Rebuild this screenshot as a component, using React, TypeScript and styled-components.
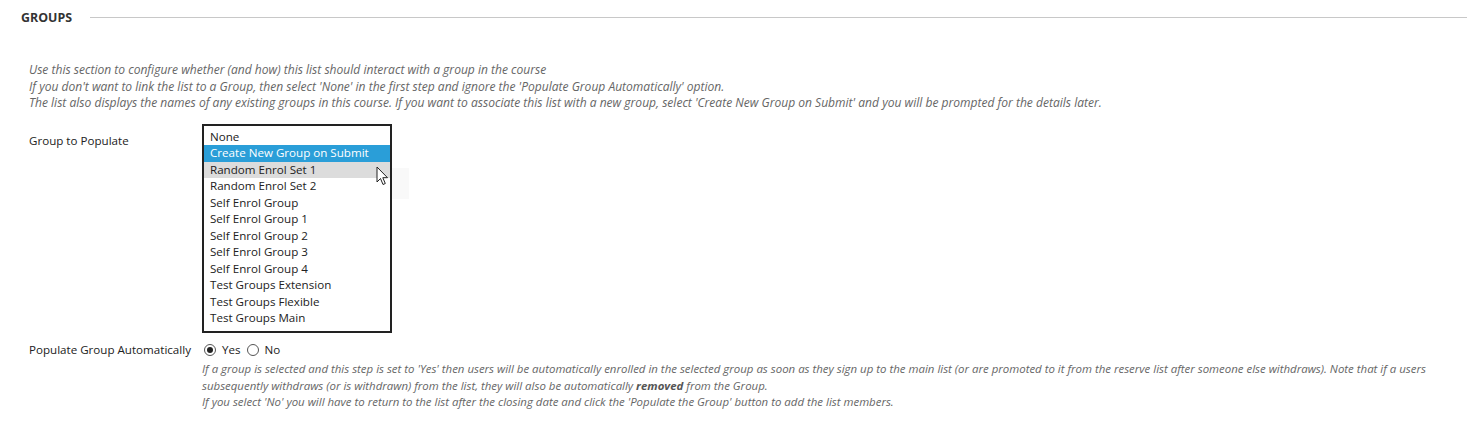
import React, { useState } from "react";
import styled, { createGlobalStyle } from "styled-components";

const Global = createGlobalStyle`
  html, body { margin: 0; padding: 0; background: #fff; }
  body { font-family: "Open Sans", "Noto Sans", Arial, sans-serif; color: #222; }
  * { box-sizing: border-box; }
`;

const Page = styled.div`
  width: 1473px;
  height: 448px;
  padding: 9px 6px 0 21px;
  position: relative;
  overflow: hidden;
`;

const SectionHeader = styled.div`
  display: flex;
  align-items: center;
  gap: 18px;
  height: 17px;
`;

const SectionTitle = styled.h2`
  margin: 0;
  font-size: 12.4px;
  font-weight: 700;
  color: #333;
  line-height: 17px;
`;

const Rule = styled.div`
  flex: 1;
  height: 1px;
  background: #c8c8c8;
`;

const Intro = styled.div`
  margin-top: 36px;
  padding-left: 8px;
  font-size: 12.06px;
  font-style: italic;
  line-height: 16.5px;
  color: #666;
`;

const FormRow = styled.div<{ $mt: number }>`
  display: grid;
  grid-template-columns: 173px 1fr;
  margin-top: ${(p) => p.$mt}px;
  padding-left: 8px;
`;

const Label = styled.div<{ $pt: number }>`
  font-size: 11.6px;
  line-height: 16.5px;
  padding-top: ${(p) => p.$pt}px;
  color: #222;
`;

const ListArea = styled.div`
  display: flex;
  align-items: flex-start;
  position: relative;
`;

const ListBox = styled.div`
  width: 190px;
  border: 2px solid #222;
  padding: 3px 0 4px;
  background: #fff;
`;

const Option = styled.div<{ $state?: "selected" | "hover" }>`
  height: 16.5px;
  line-height: 16.5px;
  padding-left: 6px;
  font-size: 11.6px;
  white-space: nowrap;
  color: ${(p) => (p.$state === "selected" ? "#fff" : "#222")};
  background: ${(p) =>
    p.$state === "selected" ? "#2a9ed8" : p.$state === "hover" ? "#dcdcdc" : "transparent"};
`;

const Ghost = styled.div`
  width: 17px;
  height: 31px;
  margin-top: 44px;
  background: #f9f9f9;
`;

const Cursor = styled.svg`
  position: absolute;
  left: 174px;
  top: 42px;
  width: 13px;
  height: 20px;
`;

const Field = styled.div``;

const RadioGroup = styled.div`
  display: flex;
  align-items: center;
  height: 16.5px;
  font-size: 11.6px;
  color: #222;
  padding-left: 2px;
`;

const RadioLabel = styled.label`
  display: flex;
  align-items: center;
  margin-right: 6px;
`;

const RadioCircle = styled.span<{ $checked?: boolean }>`
  width: 12px;
  height: 12px;
  border-radius: 50%;
  border: 1px solid #555;
  background: #fff;
  margin-right: 6px;
  display: inline-flex;
  align-items: center;
  justify-content: center;
  &::after {
    content: "";
    width: 6px;
    height: 6px;
    border-radius: 50%;
    background: ${(p) => (p.$checked ? "#222" : "transparent")};
  }
`;

const Help = styled.div`
  margin-top: 3px;
  font-size: 11.45px;
  font-style: italic;
  line-height: 16.5px;
  color: #666;
  padding-right: 28px;
  b { font-weight: 700; color: #555; }
`;

const options = [
  "None",
  "Create New Group on Submit",
  "Random Enrol Set 1",
  "Random Enrol Set 2",
  "Self Enrol Group",
  "Self Enrol Group 1",
  "Self Enrol Group 2",
  "Self Enrol Group 3",
  "Self Enrol Group 4",
  "Test Groups Extension",
  "Test Groups Flexible",
  "Test Groups Main",
];

export default function App() {
  const [auto, setAuto] = useState(true);
  return (
    <Page>
      <Global />
      <SectionHeader>
        <SectionTitle>GROUPS</SectionTitle>
        <Rule />
      </SectionHeader>
      <Intro>
        Use this section to configure whether (and how) this list should interact with a group in the course
        <br />
        If you don't want to link the list to a Group, then select 'None' in the first step and ignore the 'Populate Group Automatically' option.
        <br />
        The list also displays the names of any existing groups in this course. If you want to associate this list with a new group, select 'Create New Group on Submit' and you will be prompted for the details later.
      </Intro>
      <FormRow $mt={12}>
        <Label $pt={9}>Group to Populate</Label>
        <ListArea>
          <ListBox>
            {options.map((o, i) => (
              <Option key={o} $state={i === 1 ? "selected" : i === 2 ? "hover" : undefined}>
                {o}
              </Option>
            ))}
          </ListBox>
          <Ghost />
          <Cursor viewBox="0 0 13 20">
            <path
              d="M1 1 L1 16 L4.5 12.5 L7 18.5 L9.3 17.5 L6.8 11.7 L11.5 11.7 Z"
              fill="#fff"
              stroke="#222"
              strokeWidth="1"
              strokeLinejoin="round"
            />
          </Cursor>
        </ListArea>
      </FormRow>
      <FormRow $mt={9}>
        <Label $pt={0}>Populate Group Automatically</Label>
        <Field>
          <RadioGroup>
            <RadioLabel onClick={() => setAuto(true)}>
              <RadioCircle $checked={auto} />
              Yes
            </RadioLabel>
            <RadioLabel onClick={() => setAuto(false)}>
              <RadioCircle $checked={!auto} />
              No
            </RadioLabel>
          </RadioGroup>
          <Help>
            If a group is selected and this step is set to 'Yes' then users will be automatically enrolled in the selected group as soon as they sign up to the main list (or are promoted to it from the reserve list after someone else withdraws). Note that if a users subsequently withdraws (or is withdrawn) from the list, they will also be automatically <b>removed</b> from the Group.
            <br />
            If you select 'No' you will have to return to the list after the closing date and click the 'Populate the Group' button to add the list members.
          </Help>
        </Field>
      </FormRow>
    </Page>
  );
}
